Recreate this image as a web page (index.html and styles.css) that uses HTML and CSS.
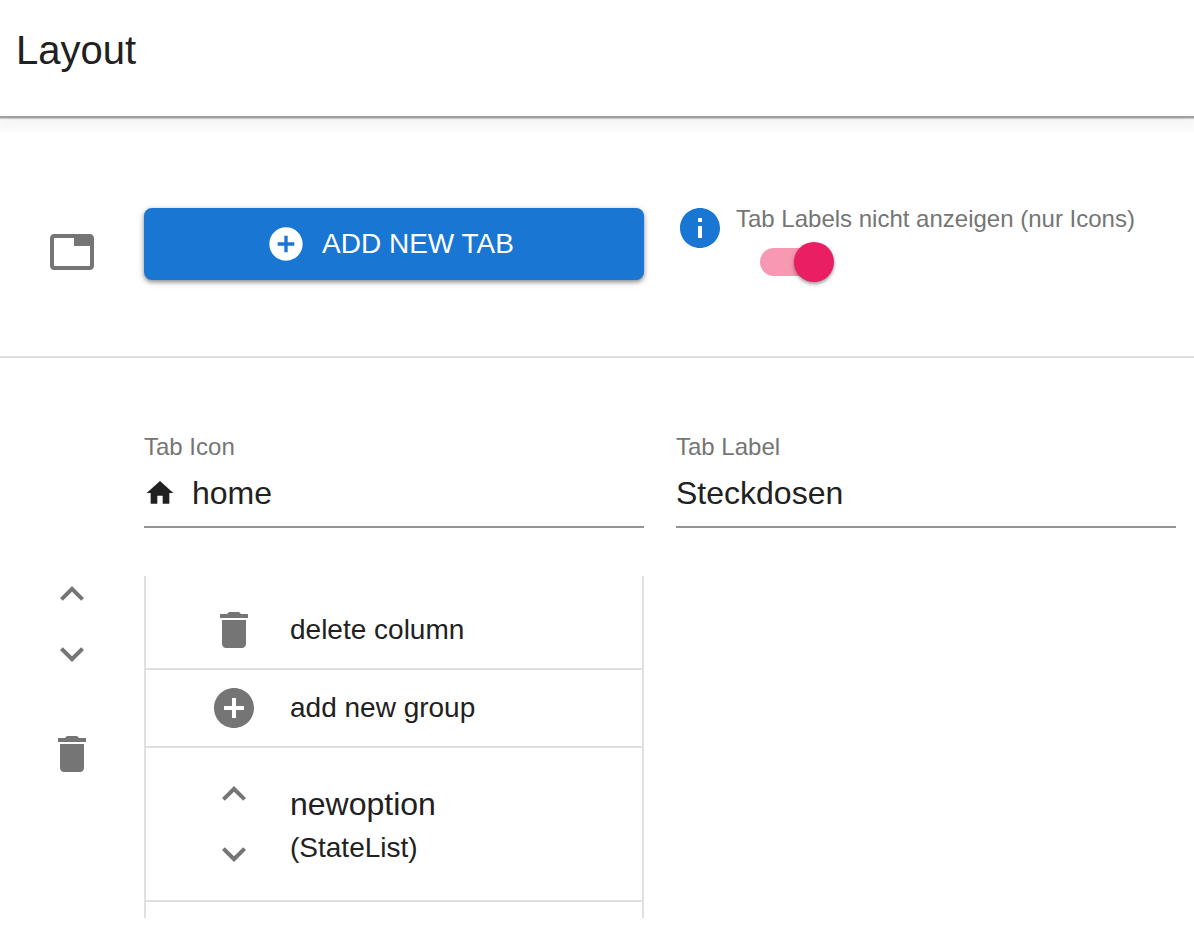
FILE: index.html
```html
<!DOCTYPE html>
<html lang="de">
<head>
<meta charset="utf-8">
<meta name="viewport" content="width=device-width, initial-scale=1">
<title>Layout</title>
<link rel="stylesheet" href="styles.css">
</head>
<body>
<svg class="sprite" aria-hidden="true">
  <symbol id="i-tab" viewBox="0 0 24 24"><path d="M21 3H3c-1.100 0-2 .9-2 2v14c0 1.100.9 2 2 2h18c1.100 0 2-.9 2-2V5c0-1.100-.9-2-2-2zm0 16H3V5h10v4h8v10z"/></symbol>
  <symbol id="i-add" viewBox="0 0 24 24"><path d="M12 2C6.480 2 2 6.480 2 12s4.480 10 10 10 10-4.480 10-10S17.520 2 12 2zm5 11h-4v4h-2v-4H7v-2h4V7h2v4h4v2z"/></symbol>
  <symbol id="i-info" viewBox="0 0 24 24"><path d="M12 2C6.480 2 2 6.480 2 12s4.480 10 10 10 10-4.480 10-10S17.520 2 12 2zm1 15h-2v-6h2v6zm0-8h-2V7h2v2z"/></symbol>
  <symbol id="i-home" viewBox="0 0 24 24"><path d="M10 20v-6h4v6h5v-8h3L12 3 2 12h3v8z"/></symbol>
  <symbol id="i-up" viewBox="0 0 24 24"><path d="M12 8l-6 6 1.410 1.410L12 10.830l4.590 4.580L18 14z"/></symbol>
  <symbol id="i-down" viewBox="0 0 24 24"><path d="M16.590 8.590L12 13.170 7.410 8.590 6 10l6 6 6-6z"/></symbol>
  <symbol id="i-delete" viewBox="0 0 24 24"><path d="M6 19c0 1.100.9 2 2 2h8c1.100 0 2-.9 2-2V7H6v12zM19 4h-3.500l-1-1h-5l-1 1H5v2h14V4z"/></symbol>
</svg>

<header class="header">
  <h1 class="title">Layout</h1>
</header>

<main class="paper">
  <section class="row row-add">
    <div class="side"><svg class="icon"><use href="#i-tab"/></svg></div>
    <button class="add-tab" type="button">
      <svg class="icon icon-md"><use href="#i-add"/></svg>
      <span>ADD NEW TAB</span>
    </button>
    <div class="option">
      <svg class="icon icon-info"><use href="#i-info"/></svg>
      <div class="option-body">
        <label class="caption" for="hide-labels">Tab Labels nicht anzeigen (nur Icons)</label>
        <input class="switch" id="hide-labels" type="checkbox" role="switch" checked>
      </div>
    </div>
  </section>

  <section class="row row-tab">
    <div class="side side-actions">
      <button class="icon-button" type="button" aria-label="Move tab up"><svg class="icon"><use href="#i-up"/></svg></button>
      <button class="icon-button" type="button" aria-label="Move tab down"><svg class="icon"><use href="#i-down"/></svg></button>
      <button class="icon-button remove" type="button" aria-label="Delete tab"><svg class="icon"><use href="#i-delete"/></svg></button>
    </div>
    <div class="field">
      <label class="caption" for="tab-icon">Tab Icon</label>
      <div class="control">
        <svg class="icon icon-sm"><use href="#i-home"/></svg>
        <input class="input" id="tab-icon" type="text" value="home">
      </div>
    </div>
    <div class="field">
      <label class="caption" for="tab-label">Tab Label</label>
      <div class="control">
        <input class="input" id="tab-label" type="text" value="Steckdosen">
      </div>
    </div>
    <ul class="column">
      <li class="item">
        <button class="icon-button" type="button" aria-labelledby="delete-column"><svg class="icon"><use href="#i-delete"/></svg></button>
        <span id="delete-column">delete column</span>
      </li>
      <li class="item">
        <button class="icon-button" type="button" aria-labelledby="add-group"><svg class="icon"><use href="#i-add"/></svg></button>
        <span id="add-group">add new group</span>
      </li>
      <li class="item item-group">
        <div class="arrows">
          <button class="icon-button" type="button" aria-label="Move group up"><svg class="icon"><use href="#i-up"/></svg></button>
          <button class="icon-button" type="button" aria-label="Move group down"><svg class="icon"><use href="#i-down"/></svg></button>
        </div>
        <div class="group-text">
          <div class="group-name">newoption</div>
          <div>(StateList)</div>
        </div>
      </li>
    </ul>
  </section>
</main>
</body>
</html>
```
FILE: styles.css
```css
* {
  box-sizing: border-box;
}

body {
  margin: 0;
  background: #fff;
  color: #212121;
  font-family: "Liberation Sans", Arial, Helvetica, sans-serif;
  font-size: 28px;
  line-height: 40px;
}

button,
input {
  font: inherit;
  color: inherit;
}

.sprite {
  display: none;
}

.icon {
  display: block;
  flex: none;
  width: 48px;
  height: 48px;
  fill: #757575;
}

.icon-md {
  width: 40px;
  height: 40px;
  fill: #fff;
}

.icon-sm {
  width: 32px;
  height: 32px;
  margin-right: 16px;
  fill: #212121;
}

.icon-info {
  fill: #1976d2;
}

.header {
  position: relative;
  padding: 18px 16px 34px;
  background: #fff;
  box-shadow: 0 2px 0 #a0a0a0, 0 3px 1px rgba(0, 0, 0, 0.16), 0 4px 12px rgba(0, 0, 0, 0.04);
}

.title {
  margin: 0;
  font-size: 40px;
  font-weight: 400;
  line-height: 64px;
}

.paper {
  border-top: 16px solid #fafafa;
}

.row {
  display: grid;
  grid-template-columns: 112px 1fr 1fr;
  column-gap: 32px;
  padding-right: 18px;
}

.row-add {
  align-items: start;
  padding-top: 72px;
  padding-bottom: 56px;
  border-bottom: 2px solid #e0e0e0;
}

.side {
  padding: 24px 0 0 48px;
}

.add-tab {
  display: flex;
  align-items: center;
  justify-content: center;
  gap: 16px;
  margin-top: 4px;
  padding: 16px 20px 16px 12px;
  border: 0;
  border-radius: 8px;
  background: #1976d2;
  color: #fff;
  box-shadow: 0 2px 4px rgba(0, 0, 0, 0.4), 0 2px 10px rgba(0, 0, 0, 0.12);
}

.option {
  display: flex;
  gap: 12px;
  min-height: 96px;
}

.option-body {
  padding-top: 3px;
}

.caption {
  display: block;
  color: #757575;
  font-size: 24px;
  line-height: 24px;
}

.switch {
  appearance: none;
  display: grid;
  align-items: center;
  width: 74px;
  height: 40px;
  margin: 11px 0 0 24px;
}

.switch::before,
.switch::after {
  content: "";
  grid-area: 1 / 1;
}

.switch::before {
  width: 68px;
  height: 28px;
  border-radius: 14px;
  background: #f898b3;
}

.switch::after {
  justify-self: end;
  width: 40px;
  height: 40px;
  border-radius: 50%;
  background: #e91e63;
  box-shadow: 0 2px 3px rgba(0, 0, 0, 0.3), 0 2px 6px rgba(0, 0, 0, 0.12);
}

.row-tab {
  padding-top: 77px;
}

.side-actions {
  grid-row: 1 / 3;
  display: flex;
  flex-direction: column;
  align-items: flex-start;
  gap: 12px;
  padding-top: 135px;
}

.icon-button {
  padding: 0;
  border: 0;
  background: none;
}

.remove {
  margin-top: 40px;
}

.field {
  min-width: 0;
}

.control {
  display: flex;
  align-items: center;
  margin-top: 12px;
  padding: 3px 0 14px;
  border-bottom: 2px solid #949494;
}

.input {
  flex: 1;
  min-width: 0;
  height: 38px;
  padding: 0;
  border: 0;
  outline: 0;
  background: none;
  font-size: 32px;
}

.column {
  grid-column: 2;
  margin: 48px 0 0;
  padding: 16px 0;
  border: solid #e0e0e0;
  border-width: 0 2px;
  list-style: none;
}

.item {
  display: flex;
  align-items: center;
  gap: 32px;
  padding: 14px 16px 14px 64px;
  border-bottom: 2px solid #e0e0e0;
}

.item-group {
  padding-top: 22px;
  padding-bottom: 22px;
}

.arrows {
  display: grid;
  gap: 12px;
}

.group-name {
  font-size: 32px;
  line-height: 48px;
}
```
